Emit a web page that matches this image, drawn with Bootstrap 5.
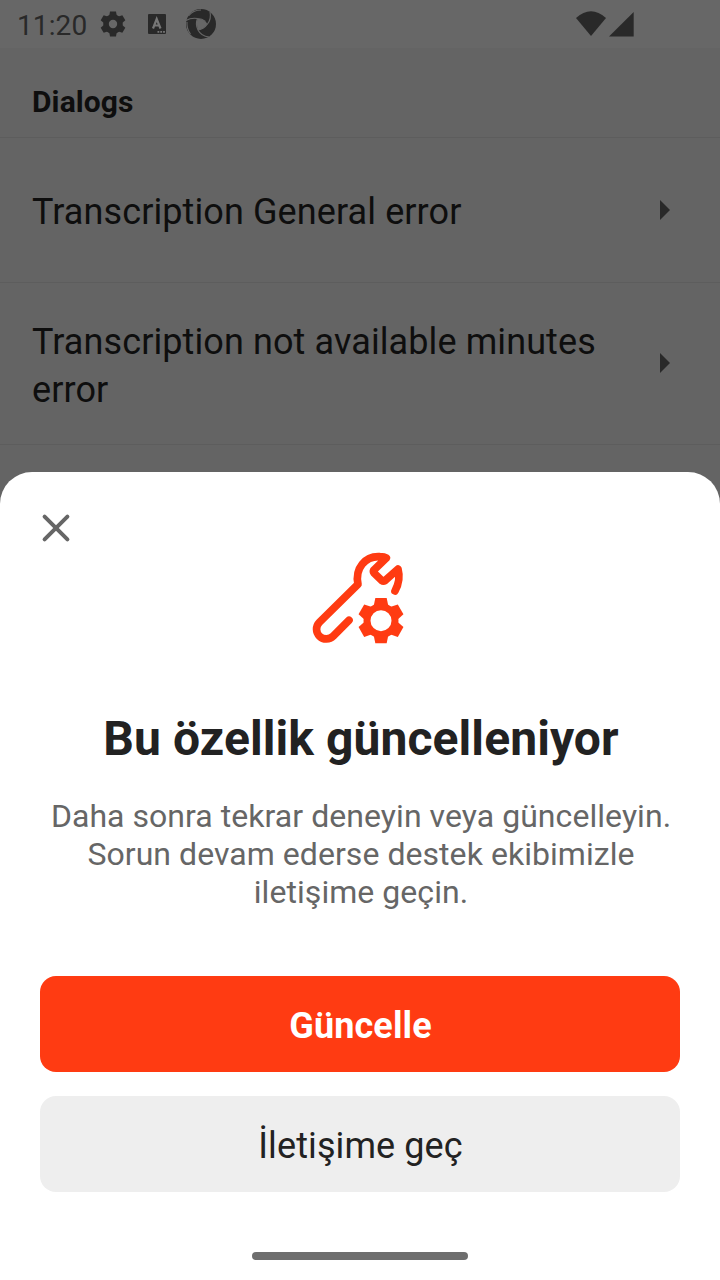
<!DOCTYPE html>
<html lang="tr">
<head>
<meta charset="utf-8">
<meta name="viewport" content="width=device-width, initial-scale=1">
<title>Dialogs</title>
<link href="https://cdn.jsdelivr.net/npm/bootstrap@5.3.0/dist/css/bootstrap.min.css" rel="stylesheet">
<style>
body { font-family: Roboto, "Liberation Sans", sans-serif; background: #646464; color: #0e0e0e; height: 1280px; overflow: hidden; }
.status-bar { height: 48px; background: #676767; color: #292929; padding-left: 16px; }
.clock { font-size: 28px; line-height: 48px; letter-spacing: .1px; width: 84px; padding: 2px 0 0 1px; }
.section-head { height: 90px; padding: 18px 32px 0; font-size: 30px; font-weight: 700; letter-spacing: .1px; border-bottom: 1px solid #5d5d5d; line-height: 72px; }
.list-group { --bs-list-group-bg: transparent; --bs-list-group-color: #0e0e0e; }
.list-group .list-row { font-size: 36px; line-height: 48px; letter-spacing: .1px; padding: 0 50px 0 32px; border: 0; border-bottom: 1px solid #5d5d5d; }
.list-group .row-one { height: 145px; }
.row-one span { padding-top: 4px; }
.list-group .row-two { height: 162px; padding-bottom: 2px; }
.row-two span { padding-top: 6px; }
.sheet { height: 808px; background: #fff; border-radius: 32px 32px 0 0; padding: 0 40px; }
.close-btn { width: 32px; height: 32px; margin-top: 40px; border: 0; background: none; }
.sheet-icon { margin-top: -4px; }
.sheet-title { font-size: 48px; line-height: 56px; font-weight: 700; letter-spacing: .08px; color: #222; margin-top: 51px; padding-left: 2px; }
.sheet-text { font-size: 32px; line-height: 38px; letter-spacing: .05px; color: #666; margin-top: 30px; padding-left: 2px; }
.actions { margin-bottom: 60px; }
.btn-sheet { height: 96px; border-radius: 16px; font-size: 36px; letter-spacing: .1px; border: 0; padding: 10px 12px 6px 13px; }
.btn-update, .btn-update:hover { background: #ff3b12; color: #fff; font-weight: 700; }
.btn-contact, .btn-contact:hover { background: #eee; color: #222; }
.home-bar { width: 216px; height: 8px; border-radius: 4px; background: #6e6e6e; margin-bottom: 20px; }
</style>
</head>
<body class="d-flex flex-column">
<header class="status-bar d-flex flex-shrink-0">
  <span class="clock">11:20</span>
  <svg width="140" height="48" viewBox="100 0 140 48" fill="#292929">
    <g transform="translate(113 24)">
      <circle r="7" fill="none" stroke="#292929" stroke-width="5.6"/>
      <path d="M-3-12.5H3L4-7H-4Z"/><path d="M-3-12.5H3L4-7H-4Z" transform="rotate(60)"/><path d="M-3-12.5H3L4-7H-4Z" transform="rotate(120)"/><path d="M-3-12.5H3L4-7H-4Z" transform="rotate(180)"/><path d="M-3-12.5H3L4-7H-4Z" transform="rotate(240)"/><path d="M-3-12.5H3L4-7H-4Z" transform="rotate(300)"/>
    </g>
    <rect x="148" y="14" width="18" height="20" rx="1"/>
    <path d="M153 28.5 156.7 19 160.5 28.5M154.4 25.5H159" fill="none" stroke="#777" stroke-width="2.2"/>
    <path d="M157.5 31h1.8v1.8h-1.8zM160.3 31h1.8v1.8h-1.8zM163.1 31h1.8v1.8h-1.8z" fill="#777"/>
    <circle cx="201" cy="24" r="15"/>
    <path d="M197.500 18.500Q205 19.500 207.500 24Q204 29 198 30Q196 24 197.500 18.500Z" fill="#676767"/>
    <path d="M186 20.500Q191 17.500 197.500 18.500Q202 18.500 205.500 21.500M210 12Q211.500 19 207.500 24Q204 29 198 30M209 37Q201 36 198 30Q195 24 197.500 18.500M188.500 16Q193 10 201 10M190.500 34Q186.500 29 187 22" fill="none" stroke="#676767" stroke-width="1.1" stroke-linecap="butt" stroke-dasharray="none"/>
  </svg>
  <svg class="ms-auto me-5" width="100" height="48" viewBox="572 0 100 48" fill="#292929">
    <path d="M576 18Q591 4.500 606 18L591 36Z"/>
    <path d="M609 36.500 633.700 12V36.500Z"/>
  </svg>
</header>
<h1 class="section-head mb-0 flex-shrink-0">Dialogs</h1>
<div class="list-group rounded-0 flex-shrink-0">
  <div class="list-group-item list-row row-one d-flex align-items-center justify-content-between">
    <span>Transcription General error</span>
    <svg width="12" height="20" viewBox="0 0 12 20" fill="#292929"><path d="M2 0 12 10 2 20Z"/></svg>
  </div>
  <div class="list-group-item list-row row-two d-flex align-items-center justify-content-between">
    <span>Transcription not available minutes<br>error</span>
    <svg width="12" height="20" viewBox="0 0 12 20" fill="#292929"><path d="M2 0 12 10 2 20Z"/></svg>
  </div>
</div>
<section class="sheet mt-auto d-flex flex-column flex-shrink-0 text-center">
  <button class="close-btn p-0 d-block flex-shrink-0" aria-label="Kapat">
    <svg class="d-block" width="32" height="32" viewBox="0 0 32 32" fill="none" stroke="#666" stroke-width="4" stroke-linecap="round"><path d="M4.600 4.600 27.400 27.400M27.400 4.600 4.600 27.400"/></svg>
  </button>
  <svg class="sheet-icon align-self-center flex-shrink-0" width="120" height="120" viewBox="0 0 360 360" fill="#ff3b12">
    <path d="M147 241 100 288A28.500 28.500 0 0 1 58 247L174 133C164 85 196 47 240 50Q253 50 259 54L221 91Q219 95 222 99L246 122Q250 125 255 122L294 87Q303 120 285 153" fill="none" stroke="#ff3b12" stroke-width="23" stroke-linecap="round" stroke-linejoin="round"/>
    <g transform="translate(243 242)">
      <circle r="42" fill="none" stroke="#ff3b12" stroke-width="21"/>
      <path d="M-17-68H17L22-44H-22Z"/><path d="M-17-68H17L22-44H-22Z" transform="rotate(60)"/><path d="M-17-68H17L22-44H-22Z" transform="rotate(120)"/><path d="M-17-68H17L22-44H-22Z" transform="rotate(180)"/><path d="M-17-68H17L22-44H-22Z" transform="rotate(240)"/><path d="M-17-68H17L22-44H-22Z" transform="rotate(300)"/>
    </g>
  </svg>
  <h2 class="sheet-title mb-0">Bu özellik güncelleniyor</h2>
  <p class="sheet-text mb-0">Daha sonra tekrar deneyin veya güncelleyin.<br>Sorun devam ederse destek ekibimizle<br>iletişime geçin.</p>
  <div class="actions d-grid gap-4 mt-auto">
    <button class="btn btn-sheet btn-update">Güncelle</button>
    <button class="btn btn-sheet btn-contact">İletişime geç</button>
  </div>
  <div class="home-bar align-self-center flex-shrink-0"></div>
</section>
<script src="https://cdn.jsdelivr.net/npm/bootstrap@5.3.0/dist/js/bootstrap.bundle.min.js"></script>
</body>
</html>
